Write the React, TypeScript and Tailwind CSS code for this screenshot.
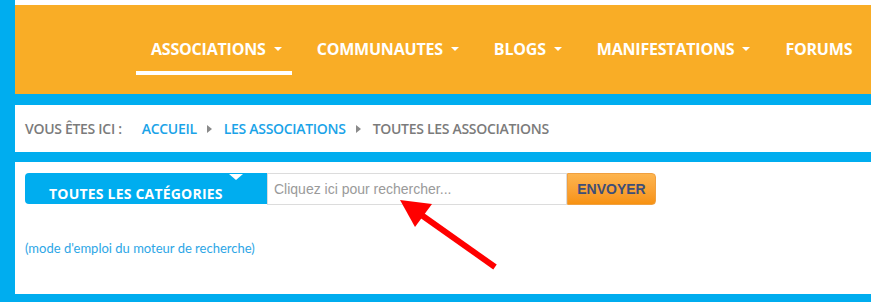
import React from "react";

const NavItem = ({ label, caret = true, active = false }: { label: string; caret?: boolean; active?: boolean }) => (
  <div
    className={`flex items-center h-[36px] pl-[15px] pr-[10px] pb-[12px] border-b-[4px] ${
      active ? "border-white" : "border-transparent"
    }`}
  >
    <span className="text-white text-[16px] leading-[20px] font-bold tracking-[-0.2px]">{label}</span>
    {caret && (
      <span className="ml-[8px] w-0 h-0 border-l-[4px] border-r-[4px] border-t-[4px] border-l-transparent border-r-transparent border-t-white" />
    )}
  </div>
);

const Crumb = () => (
  <span className="ml-[10px] mr-[12px] w-0 h-0 border-t-[4px] border-b-[4px] border-l-[5px] border-t-transparent border-b-transparent border-l-[#8a8a8a]" />
);

export default function App() {
  return (
    <div
      className="relative w-[871px] h-[302px] bg-[#00adef] flex overflow-hidden"
      style={{ fontFamily: '"Open Sans", sans-serif' }}
    >
      <div className="w-[15px] shrink-0" />
      <div className="flex-1 flex flex-col">
        <div className="h-[5px] bg-white" />
        <div className="h-[89px] bg-[#f9ad26] flex items-start pl-[121px] pt-[34px] gap-[10px]">
          <NavItem label="ASSOCIATIONS" active />
          <NavItem label="COMMUNAUTES" />
          <NavItem label="BLOGS" />
          <NavItem label="MANIFESTATIONS" />
          <NavItem label="FORUMS" caret={false} />
        </div>
        <div className="h-[11px]" />
        <div className="h-[47px] bg-white flex items-center pl-[10px] text-[14px] font-semibold tracking-[-0.3px]">
          <span className="text-[#7b7b7b]">VOUS ÊTES ICI :</span>
          <span className="ml-[20px] text-[#1aa3e8]">ACCUEIL</span>
          <Crumb />
          <span className="text-[#1aa3e8]">LES ASSOCIATIONS</span>
          <Crumb />
          <span className="text-[#7b7b7b]">TOUTES LES ASSOCIATIONS</span>
        </div>
        <div className="h-[10px]" />
        <div className="flex-1 bg-white mb-[8px] pl-[10px] pt-[11px]">
          <div className="flex h-[32px]">
            <div className="relative w-[242px] h-[31px] bg-[#00adef] rounded-l-[4px] flex items-end pl-[24px] pb-[1px]">
              <span className="text-white text-[14px] font-bold leading-[18px] tracking-[0.2px]">TOUTES LES CATÉGORIES</span>
              <span className="absolute left-[204px] top-[1px] w-0 h-0 border-l-[7px] border-r-[7px] border-t-[6px] border-l-transparent border-r-transparent border-t-white" />
            </div>
            <div className="w-[300px] h-[32px] border border-[#dcdcdc] flex items-center pl-[6px]">
              <span
                className="text-[#9a9a9a] text-[14px]"
                style={{ fontFamily: '"Liberation Sans", Arial, sans-serif' }}
              >
                Cliquez ici pour rechercher...
              </span>
            </div>
            <div
              className="w-[89px] h-[32px] rounded-r-[4px] bg-gradient-to-b from-[#fdb54e] to-[#f7920f] flex items-center justify-center border border-[#f0a040]"
              style={{ fontFamily: '"Liberation Sans", Arial, sans-serif' }}
            >
              <span className="text-[#3e4e78] text-[14px] font-bold">ENVOYER</span>
            </div>
          </div>
          <div className="mt-[34px] text-[13px] text-[#2da6e6]" style={{ fontFamily: 'Lato, sans-serif' }}>
            (mode d'emploi du moteur de recherche)
          </div>
        </div>
      </div>
      <svg className="absolute left-0 top-0 pointer-events-none" width="871" height="302">
        <line x1="495" y1="267" x2="420" y2="214" stroke="#ff0000" strokeWidth="6" />
        <polygon points="400,200 432,204 415,227" fill="#ff0000" />
      </svg>
    </div>
  );
}
